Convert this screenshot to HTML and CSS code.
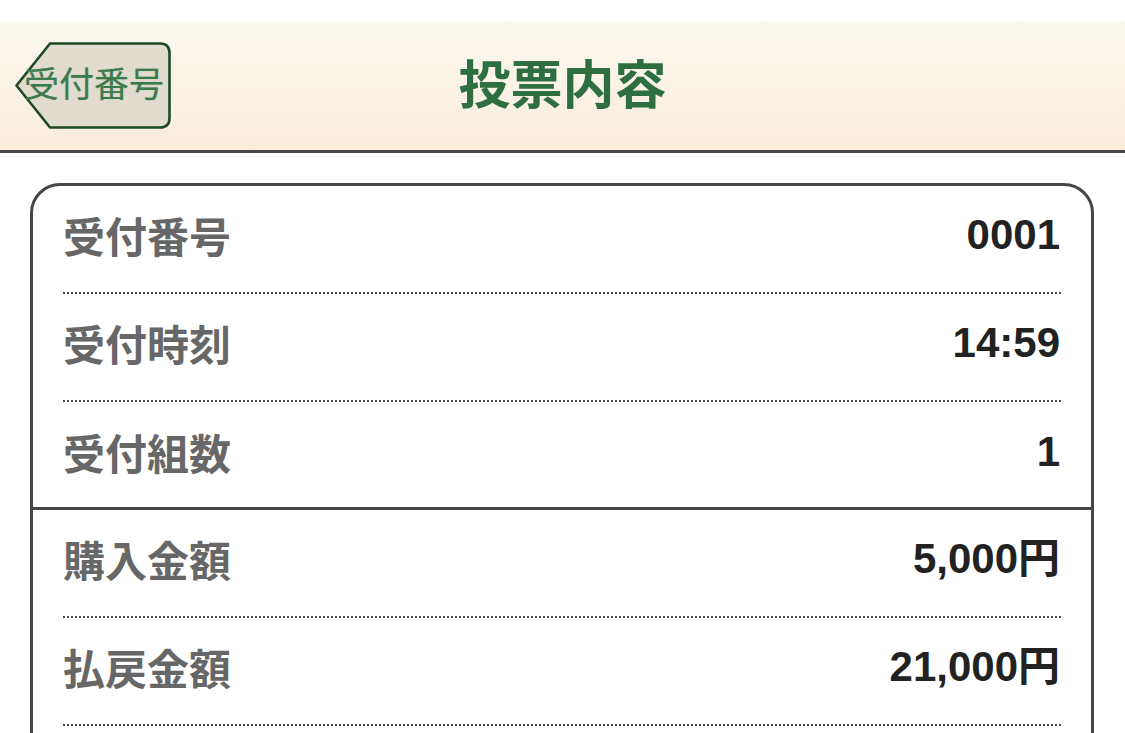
FILE: index.html
```html
<!DOCTYPE html>
<html lang="ja">
<head>
<meta charset="utf-8">
<title>投票内容</title>
<link rel="stylesheet" href="styles.css">
</head>
<body>
<header class="topbar">
  <div class="nav-left">
    <button class="back-btn" type="button">
      <svg class="back-shape" viewBox="0 0 156 87" aria-hidden="true">
        <path d="M35,1.5 H145 Q154.5,1.5 154.5,11 V76 Q154.5,85.5 145,85.5 H35 L1.5,43.5 Z" fill="#e1dccf" stroke="#1d4a20" stroke-width="2.6" stroke-linejoin="round"/>
      </svg>
      <span class="back-label">受付番号</span>
    </button>
  </div>
  <h1 class="title">投票内容</h1>
  <div class="nav-right"></div>
</header>
<main class="content">
  <section class="card">
    <div class="group">
      <div class="row"><span class="label">受付番号</span><span class="value">0001</span></div>
      <div class="row"><span class="label">受付時刻</span><span class="value">14:59</span></div>
      <div class="row"><span class="label">受付組数</span><span class="value">1</span></div>
    </div>
    <div class="group group-money">
      <div class="row"><span class="label">購入金額</span><span class="value">5,000円</span></div>
      <div class="row"><span class="label">払戻金額</span><span class="value">21,000円</span></div>
    </div>
  </section>
</main>
</body>
</html>
```

FILE: styles.css
```css
html, body {
  margin: 0;
  padding: 0;
  background: #ffffff;
}

body {
  font-family: "Noto Sans CJK JP", "Noto Sans", sans-serif;
}

.topbar {
  margin-top: 21px;
  height: 129px;
  display: grid;
  grid-template-columns: 1fr auto 1fr;
  align-items: center;
  background: linear-gradient(to bottom, #fcf9f0 0%, #f9ecdc 100%);
  border-bottom: 3px solid #484646;
}

.nav-left {
  display: flex;
  align-items: center;
  padding-left: 15px;
}

.back-btn {
  position: relative;
  width: 156px;
  height: 87px;
  padding: 0 0 8px 9px;
  margin: 0;
  border: none;
  background: transparent;
  display: flex;
  align-items: center;
  cursor: pointer;
}

.back-shape {
  position: absolute;
  left: 0;
  top: 0;
  width: 156px;
  height: 87px;
}

.back-label {
  position: relative;
  font-family: "Noto Sans CJK JP", sans-serif;
  font-size: 35px;
  line-height: 1;
  font-weight: 400;
  color: #3c7b4c;
  text-shadow: 0 0 1px rgba(40, 80, 40, 0.35);
  white-space: nowrap;
}

.title {
  margin: 0 0 8px 0;
  font-family: "Noto Sans CJK JP", sans-serif;
  font-size: 52px;
  line-height: 1;
  font-weight: 700;
  color: #2e6f3f;
}

.content {
  padding: 30px 31px 0 30px;
}

.card {
  border: 3px solid #464646;
  border-radius: 30px;
  padding-bottom: 60px;
}

.group-money {
  border-top: 3px solid #464646;
}

.row {
  height: 108px;
  box-sizing: border-box;
  padding-bottom: 10px;
  margin: 0 29px 0 30px;
  display: flex;
  align-items: center;
  justify-content: space-between;
  background-image: repeating-linear-gradient(to right, #4a4a4a 0, #4a4a4a 2px, transparent 2px, transparent 4px);
  background-size: 100% 2px;
  background-position: left bottom;
  background-repeat: no-repeat;
}

.group:first-child .row:last-child {
  background-image: none;
  height: 105px;
  padding-bottom: 6px;
}

.label {
  font-family: "Noto Sans CJK JP", sans-serif;
  font-weight: 700;
  font-size: 42px;
  line-height: 1;
  color: #676767;
}

.value {
  font-family: "Liberation Sans", "Noto Sans CJK JP", sans-serif;
  font-weight: 700;
  font-size: 42px;
  line-height: 1;
  color: #222222;
  margin-right: 2px;
}
```
